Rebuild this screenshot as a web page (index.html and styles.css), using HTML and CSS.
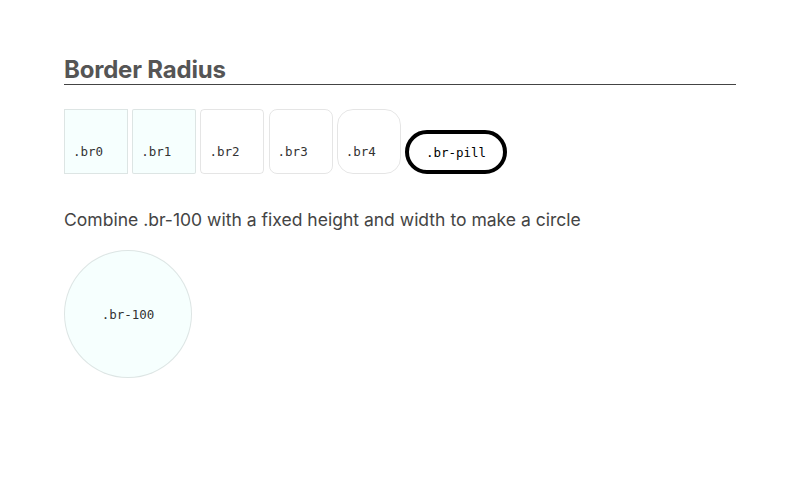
FILE: index.html
```html
<!DOCTYPE html>
<html>
<head>
<meta charset="utf-8">
<link rel="stylesheet" href="styles.css">
</head>
<body>
<main class="page">
  <h2 class="title">Border Radius</h2>
  <div class="row">
    <div class="box tint r0">.br0</div>
    <div class="box tint r1">.br1</div>
    <div class="box r2">.br2</div>
    <div class="box r3">.br3</div>
    <div class="box r4">.br4</div>
    <div class="pill">.br-pill</div>
  </div>
  <p class="note">Combine .br-100 with a fixed height and width to make a circle</p>
  <div class="circle">.br-100</div>
</main>
</body>
</html>
```
FILE: styles.css
```css
html, body { margin: 0; padding: 0; background: #fff; }
body { font-family: Inter, "Liberation Sans", sans-serif; color: #444; }
.page { padding: 56px 64px 0 64px; }
.title {
  margin: 0;
  font-size: 24px;
  font-weight: 700;
  color: #555;
  line-height: 28px;
  padding-bottom: 0;
  border-bottom: 1px solid #444;
  letter-spacing: -0.2px;
}
.row {
  display: flex;
  align-items: flex-end;
  gap: 4.2px;
  margin-top: 24px;
}
.box, .pill, .circle {
  font-family: "DejaVu Sans Mono", monospace;
  font-size: 12.5px;
  color: #333;
}
.box {
  box-sizing: border-box;
  width: 64px;
  height: 65px;
  border: 1px solid rgba(0,0,0,0.1);
  padding: 0 0 13px 8px;
  display: flex;
  align-items: flex-end;
  line-height: 16px;
}
.tint { background: #f6fffe; }
.r0 { border-radius: 0; }
.r1 { border-radius: 2px; }
.r2 { border-radius: 4px; }
.r3 { border-radius: 8px; }
.r4 { border-radius: 16px; }
.pill {
  box-sizing: border-box;
  height: 44px;
  padding: 0 17px;
  border: 4px solid #000;
  border-radius: 9999px;
  display: flex;
  align-items: center;
  color: #000;
}
.note {
  margin: 34px 0 0 0;
  font-size: 17.55px;
  line-height: 24px;
  color: #444;
}
.circle {
  margin-top: 18px;
  box-sizing: border-box;
  width: 128px;
  height: 128px;
  border-radius: 50%;
  background: #f6fffe;
  border: 1px solid rgba(0,0,0,0.1);
  display: flex;
  align-items: center;
  justify-content: center;
}
```
